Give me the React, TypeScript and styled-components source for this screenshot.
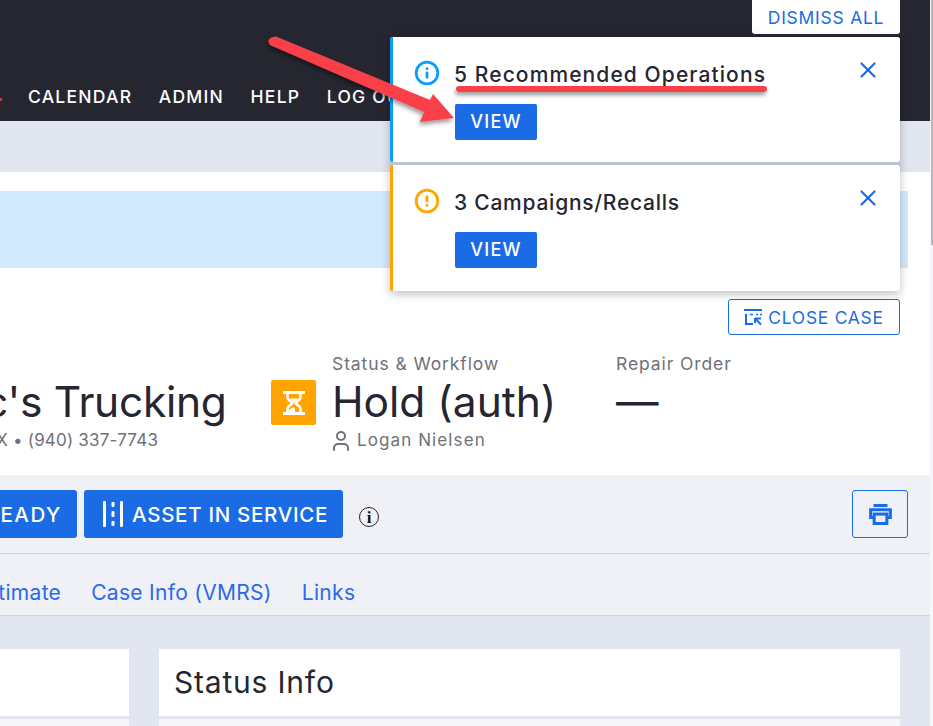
import React from 'react';
import styled, { createGlobalStyle } from 'styled-components';
import { Info, CircleAlert, X, User } from 'lucide-react';

const Global = createGlobalStyle`
  html, body { margin: 0; padding: 0; background: #fff; }
  * { box-sizing: border-box; }
  body { font-family: Inter, "Noto Sans", "Liberation Sans", sans-serif; }
`;

const Viewport = styled.div`
  position: relative;
  display: flex;
  width: 933px;
  height: 726px;
  overflow: hidden;
  background: #f5f6f9;
`;
const Main = styled.div`
  width: 930px;
  flex: none;
  display: flex;
  flex-direction: column;
  overflow: hidden;
`;
const Track = styled.div`
  flex: 1;
  padding: 0 0 0 1px;
`;
const Thumb = styled.div`
  width: 2px;
  height: 245px;
  background: #b9b9bd;
`;
const Header = styled.header`
  height: 121px;
  flex: none;
  background: #25262f;
  display: flex;
  align-items: flex-end;
  padding-bottom: 14px;
`;
const Nav = styled.nav`
  display: flex;
  align-items: center;
  gap: 26.500px;
  white-space: nowrap;
  color: #fff;
  font-size: 17.5px;
  font-weight: 500;
  letter-spacing: 1.25px;
  line-height: 20px;
`;
const NavMark = styled.span`
  width: 2px;
  height: 3px;
  background: #e0323c;
  margin-top: 4px;
  margin-right: -0.5px;
`;
const Band = styled.div`
  height: 51px;
  flex: none;
  background: #e2e6f0;
`;
const Summary = styled.section`
  height: 303px;
  flex: none;
  background: #fff;
  padding-top: 19px;
  display: flex;
  flex-direction: column;
`;
const Banner = styled.div`
  height: 77px;
  margin-right: 22px;
  background: #d3eafc;
  flex: none;
`;
const CloseRow = styled.div`
  display: flex;
  justify-content: flex-end;
  padding: 31px 30px 0 0;
`;
const OutlineButton = styled.button`
  display: flex;
  align-items: center;
  justify-content: center;
  gap: 6px;
  width: 172px;
  height: 36px;
  padding: 0;
  border: 1px solid #1a6be4;
  border-radius: 3px;
  background: #fff;
  color: #1a6be4;
  font: 400 17.4px Inter, sans-serif;
  letter-spacing: 0.75px;
`;
const Facts = styled.div`
  display: flex;
  margin-top: 18px;
  margin-left: -72px;
`;
const Fact = styled.div<{ $width: number }>`
  width: ${p => p.$width}px;
  flex: none;
  display: flex;
  flex-direction: column;
`;
const FactLabel = styled.div`
  font-size: 17.5px;
  line-height: 22px;
  letter-spacing: 0.9px;
  color: #6f7079;
  white-space: nowrap;
`;
const ClippedLabel = styled(FactLabel)`
  margin-left: -20px;
`;
const FactValue = styled.div`
  font-size: 42.5px;
  font-weight: 400;
  line-height: 56px;
  margin-top: -1px;
  color: #25262f;
  white-space: nowrap;
`;
const CustomerName = styled(FactValue)`
  letter-spacing: -0.3px;
  margin-left: 4.500px;
`;
const FactSub = styled.div`
  display: flex;
  align-items: center;
  gap: 4px;
  font-size: 17px;
  line-height: 21px;
  letter-spacing: 1.1px;
  color: #6f7079;
  white-space: nowrap;
`;
const Contact = styled(FactSub)`
  letter-spacing: 0.2px;
  margin-left: -17px;
`;
const PersonIcon = styled(User)`
  flex: none;
  margin: -2px 0 -2px -3px;
`;
const StatusTile = styled.div`
  width: 45px;
  height: 45px;
  flex: none;
  margin: 27px 16px 0 0;
  border-radius: 2px;
  background: #ffa400;
  display: flex;
  align-items: center;
  justify-content: center;
`;
const Toolbar = styled.div`
  height: 79px;
  flex: none;
  background: #f0f1f6;
  border-bottom: 1px solid #d3d4da;
  display: flex;
  align-items: flex-start;
  padding: 15px 22px 0 0;
  margin-left: -40px;
`;
const SolidButton = styled.button<{ $width: number }>`
  width: ${p => p.$width}px;
  height: 48px;
  flex: none;
  margin-right: 7px;
  display: flex;
  align-items: center;
  justify-content: flex-end;
  gap: 9px;
  padding: 0 15px;
  border: 0;
  border-radius: 3px;
  background: #1a6be4;
  color: #fff;
  font: 500 20.5px Inter, sans-serif;
  letter-spacing: 0.7px;
  white-space: nowrap;
`;
const ReadyButton = styled(SolidButton)`
  letter-spacing: 1.6px;
`;
const InfoGlyph = styled.span`
  width: 20px;
  height: 20px;
  margin: 17px 0 0 9px;
  border: 1px solid #222;
  border-radius: 50%;
  display: flex;
  align-items: center;
  justify-content: center;
  font: 700 17px "Liberation Serif", serif;
  line-height: 1;
  color: #111;
`;
const Spacer = styled.div`
  flex: 1;
`;
const PrintButton = styled.button`
  width: 56px;
  height: 48px;
  display: flex;
  align-items: center;
  justify-content: center;
  padding: 0;
  border: 1px solid #1a6be4;
  border-radius: 3px;
  background: transparent;
`;
const Tabs = styled.div`
  height: 62px;
  flex: none;
  background: #f0f1f6;
  border-bottom: 1px solid #d3d4da;
  display: flex;
  align-items: center;
  gap: 30px;
  margin-left: -26px;
  padding-top: 16px;
  color: #2a6ae8;
  font-size: 21px;
  letter-spacing: 0.3px;
  white-space: nowrap;
`;
const Content = styled.div`
  flex: 1;
  background: #e2e6f0;
  padding: 33px 30px 0 0;
  display: grid;
  grid-template-columns: 129px 1fr;
  column-gap: 30px;
`;
const Card = styled.div`
  display: flex;
  flex-direction: column;
`;
const CardHead = styled.div`
  height: 67px;
  flex: none;
  display: flex;
  align-items: center;
  padding: 0 0 2px 15px;
  background: #fff;
  font-size: 30px;
  letter-spacing: 0.8px;
  color: #25262f;
`;
const CardBody = styled.div`
  flex: 1;
  margin-top: 3px;
  background: #f7f7fb;
`;
const DismissAll = styled.button`
  position: absolute;
  top: -4px;
  left: 752px;
  width: 148px;
  height: 38px;
  padding: 4px 0 0;
  border: 0;
  border-radius: 3px;
  background: #fff;
  color: #1a6be4;
  font: 400 17.4px Inter, sans-serif;
  letter-spacing: 0.8px;
`;
const ToastStack = styled.div`
  position: absolute;
  top: 37px;
  left: 390px;
  width: 510px;
  display: flex;
  flex-direction: column;
  gap: 3px;
  background: #bcc4ce;
  box-shadow: 0 3px 10px rgba(0, 0, 0, 0.25);
  border-radius: 3px;
`;
const Toast = styled.div<{ $accent: string; $height: number }>`
  height: ${p => p.$height}px;
  background: #fff;
  border-left: 3px solid ${p => p.$accent};
  border-radius: 3px;
  display: grid;
  grid-template-columns: 62px 1fr 46px;
  padding-top: 24px;
`;
const ToastIcon = styled.div<{ $color: string }>`
  color: ${p => p.$color};
  display: flex;
  justify-content: center;
  padding-left: 6px;
  margin-top: -1px;
  height: 24px;
`;
const ToastBody = styled.div`
  display: flex;
  flex-direction: column;
  align-items: flex-start;
`;
const ToastTitle = styled.div<{ $track: number }>`
  font-size: 21px;
  font-weight: 500;
  line-height: 28px;
  margin-left: -1px;
  letter-spacing: ${p => p.$track}px;
  color: #25262f;
  white-space: nowrap;
`;
const ViewButton = styled.button`
  width: 82px;
  height: 36px;
  margin-top: 15px;
  padding: 0 0 2px;
  border: 0;
  border-radius: 2px;
  background: #1a6be4;
  color: #fff;
  font: 500 18px Inter, sans-serif;
  letter-spacing: 1.2px;
`;
const CloseIcon = styled.div`
  color: #1a6be4;
  height: 26px;
  margin: -4px 0 0 1px;
`;
const Annotation = styled.svg`
  position: absolute;
  top: 0;
  left: 0;
  pointer-events: none;
  overflow: visible;
`;

const CloseCaseIcon = () => (
  <svg width="18" height="18" viewBox="0 0 18 18" fill="none" stroke="#1a6be4" strokeWidth="2">
    <path d="M0 2h18" />
    <path d="M2 6v10h7" />
    <path d="M6 6.5h3M12 6.5h2M16 6.5h2" strokeWidth="1.6" />
    <path d="M11 10.5h6v0M11 10v5M11 10.5l6 6" strokeWidth="2" />
  </svg>
);
const Hourglass = () => (
  <svg width="22" height="24" viewBox="0 0 22 24" fill="none" stroke="#fff">
    <path d="M0 1.500h22M0 22.500h22" strokeWidth="3" />
    <path d="M4.500 3v3.500c0 2.500 4 3.500 5 5.500-1 2-5 3-5 5.500V21M17.500 3v3.500c0 2.500-4 3.500-5 5.500 1 2 5 3 5 5.500V21" strokeWidth="2.600" />
    <path d="M7 7.500h8l-4 4z" fill="#fff" stroke="none" />
    <path d="M5 21c.5-2.500 3-3.500 6-5 1 2.500 1 2.500 1 5z" fill="#fff" stroke="none" />
  </svg>
);
const LanesIcon = () => (
  <svg width="20" height="26" viewBox="0 0 20 26" fill="#fff">
    <rect x="0" y="0" width="3" height="26" rx="1" />
    <rect x="17" y="0" width="3" height="26" rx="1" />
    <rect x="8.500" y="1" width="3" height="5" rx="1" />
    <rect x="8.500" y="10" width="3" height="6" rx="1" />
    <rect x="8.500" y="20" width="3" height="5" rx="1" />
  </svg>
);
const PrinterIcon = () => (
  <svg width="23" height="21" viewBox="0 0 26 24" fill="none" stroke="#1a6be4" strokeWidth="3.500">
    <path d="M5 1.750h16" />
    <path d="M5.500 15.500H1.750V6.500h22.500v9h-3.750" />
    <rect x="5.750" y="11.500" width="14.500" height="10.750" />
  </svg>
);

export default function App() {
  return (
    <Viewport>
      <Global />
      <Main>
        <Header>
          <Nav>
            <NavMark />
            <span>CALENDAR</span>
            <span>ADMIN</span>
            <span>HELP</span>
            <span>LOG OUT</span>
          </Nav>
        </Header>
        <Band />
        <Summary>
          <Banner />
          <CloseRow>
            <OutlineButton><CloseCaseIcon />CLOSE CASE</OutlineButton>
          </CloseRow>
          <Facts>
            <Fact $width={343}>
              <ClippedLabel>Customer</ClippedLabel>
              <CustomerName>Eric's Trucking</CustomerName>
              <Contact>Decatur, TX • (940) 337-7743</Contact>
            </Fact>
            <StatusTile><Hourglass /></StatusTile>
            <Fact $width={284}>
              <FactLabel>Status &amp; Workflow</FactLabel>
              <FactValue>Hold (auth)</FactValue>
              <FactSub><PersonIcon size={24} strokeWidth={2} />Logan Nielsen</FactSub>
            </Fact>
            <Fact $width={200}>
              <FactLabel>Repair Order</FactLabel>
              <FactValue>—</FactValue>
            </Fact>
          </Facts>
        </Summary>
        <Toolbar>
          <ReadyButton $width={117}>READY</ReadyButton>
          <SolidButton $width={259}><LanesIcon />ASSET IN SERVICE</SolidButton>
          <InfoGlyph>i</InfoGlyph>
          <Spacer />
          <PrintButton><PrinterIcon /></PrintButton>
        </Toolbar>
        <Tabs>
          <span>Estimate</span>
          <span>Case Info (VMRS)</span>
          <span>Links</span>
        </Tabs>
        <Content>
          <Card>
            <CardHead />
            <CardBody />
          </Card>
          <Card>
            <CardHead>Status Info</CardHead>
            <CardBody />
          </Card>
        </Content>
      </Main>
      <Track><Thumb /></Track>

      <DismissAll>DISMISS ALL</DismissAll>
      <ToastStack>
        <Toast $accent="#0a9dff" $height={125}>
          <ToastIcon $color="#0a9dff"><Info size={26} strokeWidth={2.6} /></ToastIcon>
          <ToastBody>
            <ToastTitle $track={1.1}>5 Recommended Operations</ToastTitle>
            <ViewButton>VIEW</ViewButton>
          </ToastBody>
          <CloseIcon><X size={26} strokeWidth={2} /></CloseIcon>
        </Toast>
        <Toast $accent="#ffa400" $height={126}>
          <ToastIcon $color="#ffa400"><CircleAlert size={26} strokeWidth={2.6} /></ToastIcon>
          <ToastBody>
            <ToastTitle $track={0.75}>3 Campaigns/Recalls</ToastTitle>
            <ViewButton>VIEW</ViewButton>
          </ToastBody>
          <CloseIcon><X size={26} strokeWidth={2} /></CloseIcon>
        </Toast>
      </ToastStack>

      <Annotation width="933" height="726" viewBox="0 0 933 726">
        <defs>
          <filter id="sh" x="-20%" y="-40%" width="140%" height="200%">
            <feDropShadow dx="-1" dy="3" stdDeviation="2" floodColor="#000" floodOpacity="0.4" />
          </filter>
        </defs>
        <g filter="url(#sh)" fill="#f9404a">
          <path d="M276 36.500 L430 100 L433 94 L454 118 L420 122 L424 112 L270 45 Q265 38 276 36.500Z" />
          <rect x="456" y="86" width="311" height="6" rx="3" />
        </g>
      </Annotation>
    </Viewport>
  );
}
